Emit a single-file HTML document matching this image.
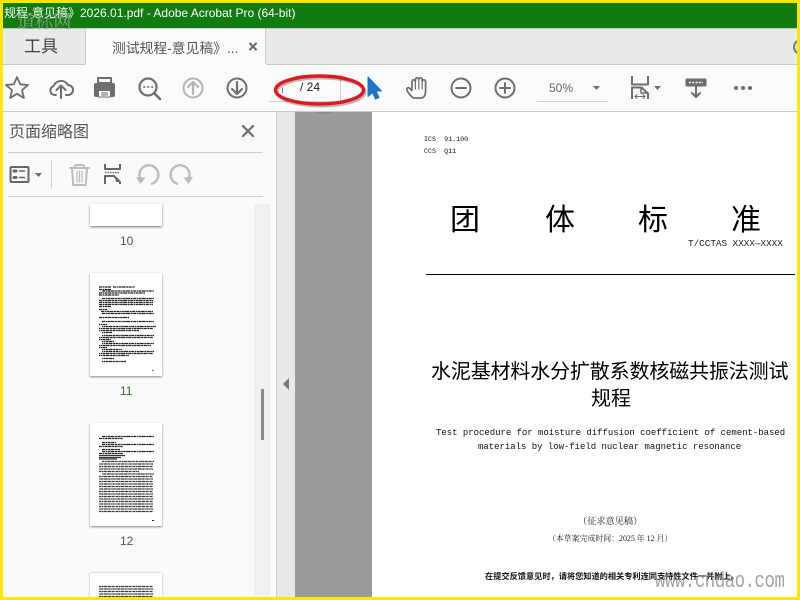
<!DOCTYPE html>
<html lang="zh"><head><meta charset="utf-8"><title>Acrobat</title>
<style>
html,body{margin:0;padding:0;width:800px;height:600px;overflow:hidden;background:#fff}
*{box-sizing:border-box}
.a{position:absolute;white-space:nowrap}
body{position:relative;font-family:"Liberation Sans","Noto Sans CJK SC",sans-serif;color:#333}
.m{font-family:"Liberation Mono","WenQuanYi Zen Hei",monospace;color:#111}
svg{position:absolute;left:0;top:0;overflow:visible}
</style></head><body>
<!-- panels -->
<div class="a" style="left:0;top:0;width:800px;height:28px;background:#107c10"></div>
<div class="a" style="left:0;top:28px;width:800px;height:37px;background:#e9e9e9;border-bottom:1px solid #c8c8c8;border-top:1px solid #c4c4c4"></div>
<div class="a" style="left:85px;top:28px;width:181px;height:38px;background:#fbfbfb;border-left:1px solid #c8c8c8;border-right:1px solid #c8c8c8;border-top:1px solid #ccc"></div>
<div class="a" style="left:0;top:65px;width:800px;height:47px;background:#fbfbfb;border-bottom:1px solid #c9c9c9"></div>
<div class="a" style="left:85px;top:64px;width:181px;height:3px;background:#fbfbfb"></div>
<div class="a" style="left:0;top:112px;width:277px;height:488px;background:#fafafa"></div>
<div class="a" style="left:276px;top:112px;width:19px;height:488px;background:#e8e8e8;border-left:1px solid #cfcfcf"></div>
<div class="a" style="left:295px;top:112px;width:77px;height:488px;background:#9a9a9a"></div>
<div class="a" style="left:372px;top:112px;width:428px;height:488px;background:#fff"></div>
<!-- title -->
<div class="a" style="left:4px;top:3px;font-size:12px;line-height:20px;color:#fff;width:400px;overflow:hidden">规程-意见稿》2026.01.pdf - Adobe Acrobat Pro (64-bit)</div>
<div class="a" style="left:17px;top:9px;font-size:18px;line-height:24px;color:rgba(150,162,150,.9);font-family:'Noto Serif CJK SC',serif;letter-spacing:.2px">道标网</div>
<!-- tabs -->
<div class="a" style="left:24px;top:36px;font-size:17px;line-height:22px;color:#444">工具</div>
<div class="a" style="left:112px;top:39px;font-size:13.800px;line-height:19px;color:#555">测试规程-意见稿》...</div>
<svg width="800" height="600" fill="none" stroke-linecap="round" stroke-linejoin="round">
<!-- tab close -->
<path d="M250 43.500l6 6M256 43.500l-6 6" stroke="#666" stroke-width="2"/>
<circle cx="801" cy="47" r="7" stroke="#777" stroke-width="2"/>
<!-- star -->
<path d="M17 77l3.200 7.300 7.800.7-6 5.200 1.900 7.800-6.900-4.200-6.900 4.200 1.900-7.800-6-5.200 7.800-.7z" stroke="#6e6e6e" stroke-width="1.800"/>
<!-- cloud upload -->
<path d="M56 95h-1a4.500 4.500 0 0 1-1.500-8.800A8 8 0 0 1 68 85a5 5 0 0 1 0 10h-2" stroke="#6e6e6e" stroke-width="2"/>
<path d="M61 98V85.500M56.500 90l4.500-4.500 4.500 4.500" stroke="#6e6e6e" stroke-width="2"/>
<!-- printer -->
<rect x="94" y="83" width="21" height="14" rx="2" fill="#6e6e6e"/>
<rect x="97" y="77" width="15" height="7" rx="1" fill="#6e6e6e"/>
<rect x="99" y="79" width="11" height="3" fill="#fbfbfb"/>
<rect x="98.500" y="90.500" width="12" height="6.500" fill="#fbfbfb" stroke="#6e6e6e" stroke-width="1"/>
<path d="M101 93h7M101 95h7" stroke="#6e6e6e" stroke-width="1" stroke-linecap="butt"/>
<!-- find -->
<circle cx="148" cy="87" r="8.500" stroke="#6e6e6e" stroke-width="2.200"/>
<path d="M154.500 93.500L160 99" stroke="#6e6e6e" stroke-width="2.600"/>
<path d="M144 87h.5M148 87h.5M152 87h.5" stroke="#6e6e6e" stroke-width="1.800"/>
<!-- up -->
<circle cx="193" cy="88" r="9.500" stroke="#b4b4b4" stroke-width="2"/>
<path d="M193 94V82.500M188 87l5-5 5 5" stroke="#b4b4b4" stroke-width="2.200"/>
<!-- down -->
<circle cx="237" cy="88" r="9.500" stroke="#6e6e6e" stroke-width="2"/>
<path d="M237 82v11.500M232 89l5 5 5-5" stroke="#6e6e6e" stroke-width="2.200"/>
<!-- page box -->
<path d="M269 101.500h72M340.500 74v29" stroke="#cdcdcd" stroke-width="1" stroke-linecap="butt"/>
<path d="M282.500 88v5" stroke="#6a7fb0" stroke-width="1"/>
<!-- cursor -->
<path d="M368 77l13.500 14h-5.500l3 6.500-3.500 1.500-3-6.500-4.500 4z" fill="#1f74c4" stroke="#1f74c4" stroke-width="1"/>
<!-- hand -->
<path d="M413.500 98C411 96.500 407.500 92 406.800 90C406.300 88 408.500 87 410 88.500L412 90.500V81.500a1.700 1.700 0 0 1 3.400 0V79.500a1.700 1.700 0 0 1 3.400 0V79.500a1.700 1.700 0 0 1 3.400 0V81.500a1.700 1.700 0 0 1 3.400 0V91C425.600 95 424 98 421 98Z" stroke="#6e6e6e" stroke-width="1.700"/>
<path d="M415.400 81.500V89M418.800 79.500V89M422.200 81.500V89" stroke="#6e6e6e" stroke-width="1.200"/>
<!-- zoom out/in -->
<circle cx="461" cy="88" r="9.500" stroke="#6e6e6e" stroke-width="2"/>
<path d="M456 88h10" stroke="#6e6e6e" stroke-width="2"/>
<circle cx="505" cy="88" r="9.500" stroke="#6e6e6e" stroke-width="2"/>
<path d="M500 88h10M505 83v10" stroke="#6e6e6e" stroke-width="2"/>
<!-- 50% -->
<path d="M537 101.500h71" stroke="#cfcfcf" stroke-width="1" stroke-linecap="butt"/>
<path d="M593 86h7l-3.500 4z" fill="#6e6e6e"/>
<!-- fit -->
<path d="M632 76v8.500h16V76" stroke="#6e6e6e" stroke-width="2" stroke-linecap="butt"/>
<path d="M632 99V87.500h9.500l6.500 6V99" stroke="#6e6e6e" stroke-width="2" stroke-linecap="butt"/>
<path d="M641 88v5h6.500" stroke="#6e6e6e" stroke-width="1.500"/>
<path d="M635 96.500h10M637 94.500l-2 2 2 2M643 94.500l2 2-2 2" stroke="#6e6e6e" stroke-width="1"/>
<path d="M654 86h7l-3.500 4z" fill="#6e6e6e"/>
<!-- download-ish -->
<rect x="686" y="79" width="20" height="7" rx="1" fill="#6e6e6e" stroke="#6e6e6e" stroke-width="1"/>
<path d="M689 82.500h14" stroke="#fbfbfb" stroke-width="1.500" stroke-dasharray="2 1.300" stroke-linecap="butt"/>
<path d="M696 87v10M692 93l4 4 4-4" stroke="#6e6e6e" stroke-width="2"/>
<!-- dots -->
<path d="M736 88h.1M743 88h.1M750 88h.1" stroke="#6e6e6e" stroke-width="4"/>
<!-- sidebar X -->
<path d="M243 126l10 10M253 126l-10 10" stroke="#6e6e6e" stroke-width="2.200"/>
<!-- sidebar lines -->
<path d="M8 152.500h255M8 196.500h255" stroke="#cdcdcd" stroke-width="1" stroke-linecap="butt"/>
<path d="M51.500 160v28" stroke="#cdcdcd" stroke-width="1" stroke-linecap="butt"/>
<!-- options -->
<rect x="10.500" y="167" width="18" height="15" rx="1" stroke="#666" stroke-width="2"/>
<path d="M14 171h2M14 177.500h2" stroke="#666" stroke-width="3"/>
<path d="M19.500 171h5M19.500 177.500h5" stroke="#666" stroke-width="1.500"/>
<path d="M35 173h7l-3.500 4z" fill="#6e6e6e"/>
<!-- trash -->
<path d="M70 168h19M75 168v-1.500a1.500 1.500 0 0 1 1.500-1.500h6a1.500 1.500 0 0 1 1.500 1.500V168M72 168l1.200 17h12.600l1.200-17" stroke="#bcbcbc" stroke-width="2"/>
<path d="M77 171v11M79.500 171v11M82 171v11" stroke="#bcbcbc" stroke-width="1.200"/>
<!-- insert -->
<path d="M105 164v5h15v-5" stroke="#666" stroke-width="2" stroke-linecap="butt"/>
<path d="M105 172.500h15" stroke="#666" stroke-width="1.500" stroke-dasharray="1.500 1" stroke-linecap="butt"/>
<path d="M105 184v-8h9l6 6v2" stroke="#666" stroke-width="2" stroke-linecap="butt"/>
<path d="M115 177l1 5h4z" fill="#666"/>
<!-- rotate -->
<path d="M140 178a9.500 9.500 0 1 1 11 6" stroke="#bcbcbc" stroke-width="2.400" stroke-linecap="butt"/>
<path d="M136 177l9.500 .5-5 6.500z" fill="#bcbcbc"/>
<path d="M189 178a9.500 9.500 0 1 0-11 6" stroke="#bcbcbc" stroke-width="2.400" stroke-linecap="butt"/>
<path d="M193 177l-9.500 .5 5 6.500z" fill="#bcbcbc"/>
<!-- collapse arrow -->
<path d="M289 378v12l-6-6z" fill="#777"/>
<!-- grey panel notch -->
<path d="M315 112h18l-3 1.500h-12z" fill="#888"/>
</svg>
<div class="a" style="left:300px;top:79px;font-size:12px;line-height:17px;color:#222">/ 24</div>
<div class="a" style="left:549px;top:80px;font-size:12px;line-height:16px;color:#666">50%</div>
<!-- red ellipse -->
<svg width="800" height="600" fill="none">
<ellipse cx="321" cy="92" rx="44" ry="14" stroke="#666" stroke-width="3" opacity=".45"/>
<ellipse cx="319.500" cy="90" rx="44" ry="14" stroke="#dc1a22" stroke-width="3.400"/>
</svg>
<!-- sidebar -->
<div class="a" style="left:9px;top:122px;font-size:16px;line-height:22px;color:#555">页面缩略图</div>
<div class="a" style="left:254px;top:204px;width:16px;height:396px;background:#f0f0f0"></div>
<div class="a" style="left:261px;top:389px;width:3px;height:51px;background:#8d8d8d"></div>
<!-- thumbs -->
<div class="a" style="left:90px;top:204px;width:72px;height:22px;background:#fff;box-shadow:0 1px 2px #777"></div>
<div class="a" style="left:90px;top:273px;width:72px;height:103px;background:#fff;box-shadow:0 1px 2px #888"></div>
<div class="a" style="left:90px;top:423px;width:72px;height:103px;background:#fff;box-shadow:0 1px 2px #888"></div>
<div class="a" style="left:90px;top:573px;width:72px;height:30px;background:#fff;box-shadow:0 0 2px #aaa"></div>
<svg width="800" height="600" fill="none" stroke="#222" stroke-width="1.200" stroke-linecap="butt">
<g stroke-dasharray="3 .6 1.500 .5 2.500 .4 4 .6 2 .5">
<path d="M99 287h12M113 287h22M99 289.500h12M102 291h52M99 293h46M99 295h20M102 298.500h52M99 300.500h54M99 302.500h54M99 304.500h54M99 306.500h12M99 309.500h8M101 311.500h52M102 313.500h52M99 317.500h30M102 321.500h52"/>
<path d="M99 324.500h8M102 326.500h54M99 328.500h54M99 330.500h40M102 332.500h10M102 335.500h52M99 337.500h54M99 339.500h12M102 341.500h12M102 343.500h52M99 345.500h52M99 347.500h8M102 349.500h20M102 351.500h52M99 353.500h54M99 355.500h30M102 358.500h12M102 361.500h24" stroke-dashoffset="2"/>
<path d="M102 436.500h52M99 438.500h24M102 442.500h14M102 444.500h52M99 446.500h24M102 449.500h18M102 451.500h52M99 453.500h24"/>
</g>
<path d="M99 455.500h26M99 457.500h22M99 459h18" stroke-width="1.200" opacity=".9"/>
<g stroke-width="1.300" opacity=".9" stroke-dasharray="2.500 .5 1.500 .4 3 .5 4 .5 2 .4 1.200 .5">
<path d="M102 461.500h52M99 466.500h54M99 471.500h40M99 476.500h54M99 481.500h54M99 486.500h54M99 491.500h54M99 496.500h54M99 501.500h54M99 506.500h54M99 511.500h54M99 586.500h54M99 591.500h54M99 596.500h54"/>
<path d="M99 464h54M99 469h54M102 474h52M99 479h54M99 484h54M99 489h54M99 494h54M99 499h54M99 504h54M99 509h54M99 589h54M99 594h54" stroke-dashoffset="3.700"/>
</g>
<path d="M152 520.500h2" stroke-width="1"/>
<path d="M152 370.500h2" stroke="#888"/>
</svg>
<div class="a" style="left:120px;top:234px;font-size:12px;line-height:15px;color:#555">10</div>
<div class="a" style="left:120px;top:384px;font-size:12px;line-height:15px;color:#3f6b2c">11</div>
<div class="a" style="left:120px;top:534px;font-size:12px;line-height:15px;color:#555">12</div>
<!-- document -->
<div class="a m" style="left:424px;top:136px;font-size:6.700px;line-height:9px;white-space:pre">ICS  91.100</div>
<div class="a m" style="left:424px;top:148px;font-size:6.700px;line-height:9px;white-space:pre">CCS  Q11</div>
<div class="a" style="left:450px;top:203px;font-size:30px;line-height:36px;color:#000">团</div>
<div class="a" style="left:545px;top:203px;font-size:30px;line-height:36px;color:#000">体</div>
<div class="a" style="left:638px;top:203px;font-size:30px;line-height:36px;color:#000">标</div>
<div class="a" style="left:731px;top:203px;font-size:30px;line-height:36px;color:#000">准</div>
<div class="a m" style="left:688px;top:237.500px;font-size:9.300px;line-height:12px;color:#222">T/CCTAS XXXX—XXXX</div>
<div class="a" style="left:426px;top:273.500px;width:369px;height:1.500px;background:#000"></div>
<div class="a" style="left:431px;top:360px;font-size:20px;line-height:24px;color:#000;letter-spacing:-.15px">水泥基材料水分扩散系数核磁共振法测试</div>
<div class="a" style="left:591px;top:387px;font-size:20px;line-height:24px;color:#000">规程</div>
<div class="a m" style="left:436px;top:427px;font-size:9px;line-height:12px;color:#111;letter-spacing:-.03px">Test procedure for moisture diffusion coefficient of cement-based</div>
<div class="a m" style="left:478px;top:441px;font-size:9px;line-height:12px;color:#111;letter-spacing:-.03px">materials by low-field nuclear magnetic resonance</div>
<div class="a" style="left:578px;top:515px;font-size:9.200px;line-height:13px;color:#222;font-family:'Liberation Serif','Noto Serif CJK SC',serif">（征求意见稿）</div>
<div class="a" style="left:548px;top:533px;font-size:7.900px;line-height:12px;color:#222;font-family:'Liberation Serif','Noto Serif CJK SC',serif">（本草案完成时间：2025 年 12 月）</div>
<div class="a" style="left:485px;top:571px;font-size:8.200px;line-height:12px;color:#111;font-family:'Liberation Serif','Noto Sans CJK SC',serif;font-weight:bold">在提交反馈意见时，请将您知道的相关专利连同支持性文件一并附上。</div>
<div class="a" style="left:655px;top:567px;font-size:22px;line-height:30px;color:rgba(125,125,125,.7);font-family:'Liberation Mono',monospace;letter-spacing:-.6px;transform:scaleX(.79);transform-origin:left top;width:210px">www.cndao.com</div>
<!-- yellow frame -->
<div class="a" style="left:0;top:0;width:800px;height:600px;border:solid #ffe600;border-width:3.500px 3px 3px 3.500px"></div>
</body></html>
